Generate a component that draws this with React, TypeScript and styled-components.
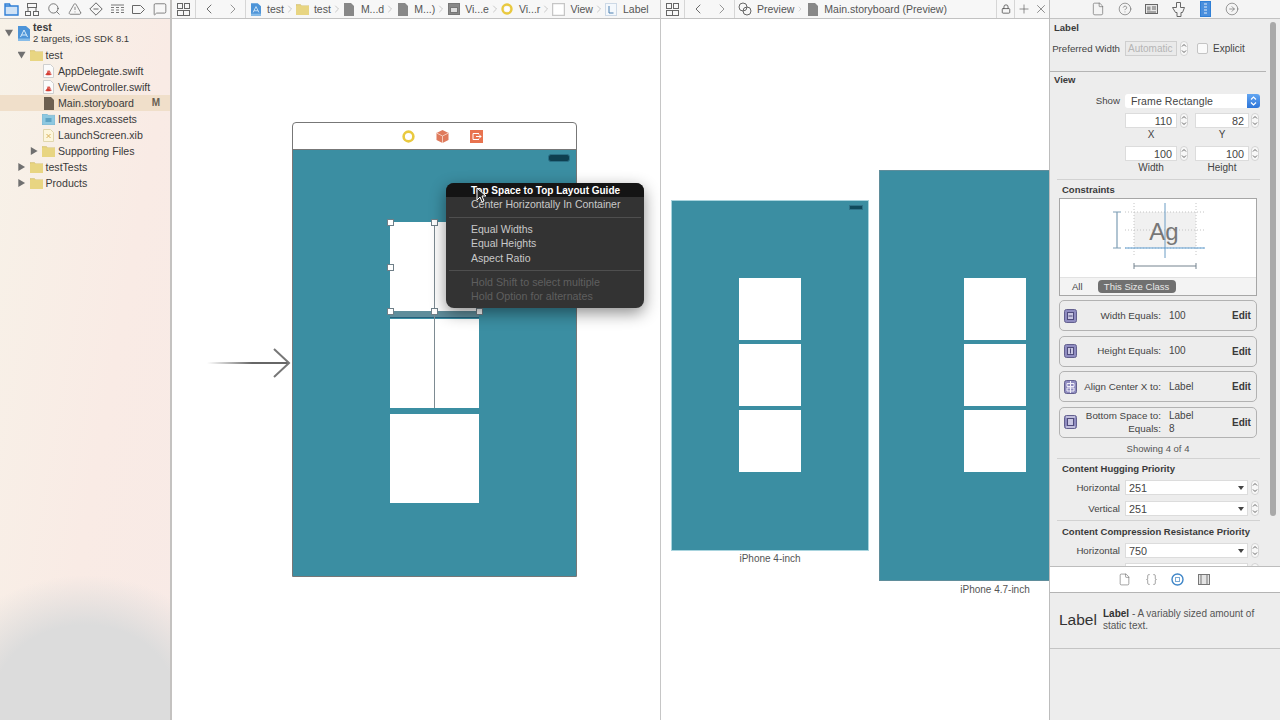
import React from "react";
import styled, { createGlobalStyle } from "styled-components";
import {
  ChevronLeft,
  ChevronRight,
  CircleArrowRight,
  CircleHelp,
  Braces,
  File,
  Lock,
  MessageSquare,
  Plus,
  Search,
  TriangleAlert,
  X,
} from "lucide-react";

const GlobalStyle = createGlobalStyle`
  html, body {
    margin: 0;
    padding: 0;
    background: #fff;
  }
  body {
    font-family: "Liberation Sans", Arial, sans-serif;
    color: #333;
  }
`;

const Screen = styled.div`
  width: 1280px;
  height: 720px;
  display: flex;
  overflow: hidden;
  font-size: 10.6px;
`;

const Bar = styled.div`
  height: 19px;
  flex: none;
  display: flex;
  align-items: center;
  box-sizing: border-box;
  background: #f7f7f7;
  border-bottom: 1px solid #c2c2c2;
  color: #555;
`;

/* navigator */
const Navigator = styled.div`
  width: 172px;
  flex: none;
  display: flex;
  flex-direction: column;
  box-sizing: border-box;
  border-right: 2px solid #c4c2c0;
  background:
    radial-gradient(ellipse 150px 125px at 85px 700px, #dcdcdc 60%, rgba(220, 220, 220, 0) 100%),
    linear-gradient(100deg, #f7f2e8 0%, #f9ebe5 60%, #f8eae6 100%);
`;

const NavBar = styled(Bar)`
  justify-content: space-between;
  padding: 0 2px 0 3px;
`;

const NavTool = styled.span`
  width: 16px;
  height: 16px;
  display: flex;
  align-items: center;
  justify-content: center;
`;

const Tree = styled.div`
  display: flex;
  flex-direction: column;
`;

const TreeRow = styled.div<{ $depth: number; $selected?: boolean }>`
  height: 16px;
  display: flex;
  align-items: center;
  padding-left: ${(p) => 5 + p.$depth * 12.5}px;
  background: ${(p) => (p.$selected ? "#f0dfca" : "transparent")};
  color: #3a3a3a;
  position: relative;
`;

const ProjectRow = styled(TreeRow)`
  height: 28px;
`;

const Disclosure = styled.span<{ $open?: boolean; $empty?: boolean }>`
  width: 8px;
  height: 8px;
  flex: none;
  margin-right: 4px;
  visibility: ${(p) => (p.$empty ? "hidden" : "visible")};
  background: #707070;
  clip-path: ${(p) =>
    p.$open ? "polygon(0 10%, 100% 10%, 50% 95%)" : "polygon(10% 0, 95% 50%, 10% 100%)"};
`;

const TreeIcon = styled.span`
  width: 13px;
  height: 14px;
  flex: none;
  margin-right: 3px;
  display: flex;
  align-items: center;
  justify-content: center;
`;

const ProjectText = styled.div`
  display: flex;
  flex-direction: column;
  line-height: 12px;
  font-size: 9.5px;
  white-space: nowrap;
  b {
    font-size: 10.6px;
  }
`;

const Badge = styled.span`
  position: absolute;
  right: 10px;
  top: 2px;
  font-weight: 700;
  font-size: 10px;
  color: #6a5f52;
`;

/* editor */
const Editor = styled.div`
  width: 489px;
  flex: none;
  display: flex;
  flex-direction: column;
  box-sizing: border-box;
  border-right: 1px solid #c6c6c6;
  background: #fff;
`;

const PreviewPane = styled.div`
  width: 389px;
  flex: none;
  display: flex;
  flex-direction: column;
  box-sizing: border-box;
  border-right: 1px solid #bdbdbd;
  background: #fff;
`;

const BarButton = styled.span<{ $w: number }>`
  width: ${(p) => p.$w}px;
  height: 18px;
  flex: none;
  display: flex;
  align-items: center;
  justify-content: center;
`;

const BarRule = styled.span`
  width: 1px;
  height: 18px;
  flex: none;
  background: #d6d6d6;
`;

const Crumbs = styled.div`
  display: flex;
  align-items: center;
  padding-left: 3px;
  height: 18px;
`;

const Crumb = styled.span`
  display: flex;
  align-items: center;
  gap: 5px;
  color: #555;
  font-size: 10.5px;
  white-space: nowrap;
`;

const CrumbIcon = styled.span`
  width: 13px;
  height: 14px;
  display: flex;
  align-items: center;
  justify-content: center;
`;

const CrumbSep = styled.span`
  width: 12px;
  display: flex;
  justify-content: center;
  color: #999;
`;

const RightTools = styled.div`
  margin-left: auto;
  display: flex;
  align-items: center;
`;

const Canvas = styled.div`
  flex: 1;
  position: relative;
  overflow: hidden;
`;

const EntryArrow = styled.svg`
  position: absolute;
  left: 35px;
  top: 328px;
`;

const Scene = styled.div`
  position: absolute;
  left: 120px;
  top: 103px;
  width: 285px;
  height: 455px;
  display: flex;
  flex-direction: column;
  box-sizing: border-box;
  border: 1px solid #777;
  border-radius: 4px 4px 0 0;
`;

const SceneDock = styled.div`
  height: 26px;
  flex: none;
  display: flex;
  align-items: center;
  justify-content: center;
  gap: 21px;
  padding-left: 16px;
  border-bottom: 1px solid #777;
`;

const SceneView = styled.div`
  flex: 1;
  position: relative;
  background: #3b8ea2;
  display: flex;
  flex-direction: column;
  align-items: center;
  padding-top: 72px;
`;

const Battery = styled.span`
  position: absolute;
  right: 6px;
  top: 4px;
  width: 22px;
  height: 8px;
  box-sizing: border-box;
  border: 1px solid #2a6f85;
  border-radius: 3px;
  background: #0e3f50;
`;

const SceneLabel = styled.div<{ $gap?: number }>`
  width: 89px;
  height: 89px;
  flex: none;
  position: relative;
  background: #fff;
  margin-top: ${(p) => p.$gap ?? 0}px;
`;

const GuideLine = styled.span<{ $h: number }>`
  position: absolute;
  left: 44px;
  top: 0;
  width: 1px;
  height: ${(p) => p.$h}px;
  background: #7d8b92;
  z-index: 2;
`;

const Handle = styled.span<{ $x: number; $y: number }>`
  position: absolute;
  left: ${(p) => p.$x - 3}px;
  top: ${(p) => p.$y - 3}px;
  width: 5px;
  height: 5px;
  background: #fff;
  border: 1px solid #6f7f88;
  z-index: 3;
`;

const SpacingBand = styled.span`
  position: absolute;
  left: 0;
  top: 89px;
  width: 100%;
  height: 6px;
  background: #5f8d9b;
  border-bottom: 1px solid #24607c;
`;

const PopMenu = styled.div`
  position: absolute;
  left: 274px;
  top: 164px;
  width: 198px;
  height: 125px;
  box-sizing: border-box;
  border-radius: 8px;
  background: #333;
  box-shadow: 0 5px 16px rgba(0, 0, 0, 0.45);
  overflow: hidden;
  z-index: 5;
  font-size: 10.5px;
`;

const MenuItem = styled.div<{ $active?: boolean; $muted?: boolean }>`
  height: 14.4px;
  line-height: 15px;
  padding-left: 25px;
  white-space: nowrap;
  background: ${(p) => (p.$active ? "#141414" : "transparent")};
  color: ${(p) => (p.$active ? "#fff" : p.$muted ? "#5f5f5f" : "#c9c9c9")};
  font-weight: ${(p) => (p.$active ? 700 : 400)};
  font-size: ${(p) => (p.$active ? 10 : p.$muted ? 10.7 : 10.5)}px;
`;

const MenuRule = styled.div`
  height: 1px;
  margin: 5px 3px 4px 3px;
  background: #4f4f4f;
`;

const Cursor = styled.svg`
  position: absolute;
  left: 304px;
  top: 168px;
  z-index: 6;
`;

const PreviewCanvas = styled(Canvas)``;

const Phone = styled.div<{ $x: number; $y: number; $w: number; $h: number; $edge: string }>`
  position: absolute;
  left: ${(p) => p.$x}px;
  top: ${(p) => p.$y}px;
  width: ${(p) => p.$w}px;
  height: ${(p) => p.$h}px;
  box-sizing: border-box;
  border: 1px solid ${(p) => p.$edge};
  background: #3b8ea2;
  display: flex;
  flex-direction: column;
  align-items: center;
  justify-content: center;
  gap: 4px;
  padding-bottom: 2px;
`;

const PhoneLabel = styled.div`
  width: 62px;
  height: 62px;
  background: #fff;
`;

const PhoneBattery = styled.span`
  position: absolute;
  right: 5px;
  top: 4px;
  width: 14px;
  height: 5px;
  background: #0f4a5c;
  border: 1px solid #2f7288;
  box-sizing: border-box;
`;

const PhoneCaption = styled.div<{ $x: number; $y: number; $w: number }>`
  position: absolute;
  left: ${(p) => p.$x}px;
  top: ${(p) => p.$y}px;
  width: ${(p) => p.$w}px;
  text-align: center;
  font-size: 10px;
  line-height: 13px;
  color: #555;
  white-space: nowrap;
`;

/* inspector */
const Inspector = styled.div`
  width: 230px;
  flex: none;
  display: flex;
  flex-direction: column;
  background: #ededed;
  font-size: 10px;
  color: #444;
`;

const InspectorBar = styled(Bar)`
  padding-left: 35px;
  background: #f4f4f4;
  color: #666;
`;

const InspectorTab = styled.span<{ $on?: boolean }>`
  width: 26.7px;
  height: 18px;
  flex: none;
  display: flex;
  align-items: center;
  justify-content: center;
  color: ${(p) => (p.$on ? "#2f7fd6" : "#666")};
`;

const Scroller = styled.div`
  height: 547px;
  flex: none;
  position: relative;
  overflow: hidden;
`;

const ScrollThumb = styled.span`
  position: absolute;
  left: 220px;
  top: 3px;
  width: 6px;
  height: 494px;
  border-radius: 3px;
  background: #a9a9a9;
`;

const Section = styled.div<{ $top: number; $height: number; $indent?: boolean; $rule?: boolean }>`
  height: ${(p) => p.$height}px;
  box-sizing: border-box;
  padding-top: ${(p) => p.$top}px;
  width: 216px;
  border-bottom: ${(p) => (p.$rule ? "1px solid #b4b4b4" : "0")};
  ${(p) => (p.$indent ? "margin-left: 7px; width: 203px; border-bottom-color: #d2d2d2;" : "")}
`;

const SoftRule = styled.div`
  height: 1px;
  margin: 5px 0 0 7px;
  width: 203px;
  background: #d2d2d2;
`;

const SectionTitle = styled.div<{ $x?: number; $mb?: number }>`
  height: 14px;
  line-height: 16px;
  font-weight: 700;
  font-size: 9.5px;
  color: #3a3a3a;
  padding-left: ${(p) => p.$x ?? 4}px;
  margin-bottom: ${(p) => p.$mb ?? 7}px;
  white-space: nowrap;
`;

const FormRow = styled.div<{ $mb?: number; $outdent?: boolean }>`
  height: 15px;
  display: flex;
  align-items: center;
  margin-bottom: ${(p) => p.$mb ?? 0}px;
  margin-left: ${(p) => (p.$outdent ? -7 : 0)}px;
`;

const RowLabel = styled.span<{ $w?: number }>`
  width: ${(p) => p.$w ?? 70}px;
  margin-right: 5px;
  text-align: right;
  flex: none;
  white-space: nowrap;
  font-size: 9.7px;
`;

const Field = styled.span<{ $w: number; $muted?: boolean; $left?: boolean; $ml?: number }>`
  width: ${(p) => p.$w}px;
  height: 15px;
  flex: none;
  box-sizing: border-box;
  display: flex;
  align-items: center;
  justify-content: ${(p) => (p.$left ? "flex-start" : "flex-end")};
  padding: 0 ${(p) => (p.$muted ? 1 : 4)}px 0 ${(p) => (p.$muted ? 2 : 3)}px;
  margin-left: ${(p) => p.$ml ?? 0}px;
  background: ${(p) => (p.$muted ? "#eaeaea" : "#fff")};
  border: 1px solid ${(p) => (p.$muted ? "#cfcfcf" : "#dcdcdc")};
  color: ${(p) => (p.$muted ? "#b5b5b5" : "#444")};
  font-size: ${(p) => (p.$muted ? 10 : 10.8)}px;
  white-space: nowrap;
  overflow: hidden;
  position: relative;
`;

const ComboCaret = styled.span`
  position: absolute;
  right: 3px;
  top: 5px;
  border-left: 3px solid transparent;
  border-right: 3px solid transparent;
  border-top: 4px solid #444;
`;

const StepperBox = styled.span<{ $ml: number }>`
  width: 8px;
  height: 15px;
  flex: none;
  margin-left: ${(p) => p.$ml}px;
  box-sizing: border-box;
  border: 1px solid #d4d4d4;
  border-radius: 4px;
  background: #f7f7f7;
  display: flex;
  align-items: center;
  justify-content: center;
`;

const CheckBox = styled.span`
  width: 9px;
  height: 9px;
  margin-left: 9px;
  margin-right: 5px;
  flex: none;
  border: 1px solid #c4c4c4;
  border-radius: 2px;
  background: #fafafa;
`;

const Popup = styled.span`
  width: 135px;
  height: 14px;
  flex: none;
  box-sizing: border-box;
  display: flex;
  align-items: center;
  padding-left: 6px;
  background: #fff;
  border-radius: 3px;
  position: relative;
  overflow: hidden;
  font-size: 10.5px;
  letter-spacing: 0.1px;
`;

const PopupEnd = styled.span`
  position: absolute;
  right: 0;
  top: 0;
  width: 13px;
  height: 14px;
  background: linear-gradient(#63a6f2, #2c74d8);
  display: flex;
  align-items: center;
  justify-content: center;
`;

const CaptionRow = styled.div<{ $mb?: number }>`
  height: 12px;
  display: flex;
  line-height: 12px;
  margin: 1px 0 ${(p) => p.$mb ?? 0}px 75px;
  font-size: 10px;
`;

const Caption = styled.span<{ $w: number; $ml?: number }>`
  width: ${(p) => p.$w}px;
  margin-left: ${(p) => p.$ml ?? 0}px;
  text-align: center;
`;

const ConstraintBox = styled.div`
  width: 198px;
  height: 98px;
  margin-left: 2px;
  box-sizing: border-box;
  border: 1px solid #a6a6a6;
  background: #fff;
  display: flex;
  flex-direction: column;
`;

const ConstraintArt = styled.svg`
  flex: none;
  display: block;
`;

const SizeTabs = styled.div`
  flex: 1;
  display: flex;
  align-items: center;
  border-top: 1px solid #e2e2e2;
  background: #f3f3f3;
  padding-left: 12px;
  font-size: 9.5px;
`;

const SizeTab = styled.span<{ $on?: boolean }>`
  ${(p) =>
    p.$on
      ? `margin-left: 15px;
         width: 78px;
         height: 13px;
         line-height: 13px;
         text-align: center;
         border-radius: 4px;
         background: #707070;
         color: #e8e8e8;`
      : ""}
`;

const ConstraintList = styled.div`
  display: flex;
  flex-direction: column;
  gap: 4.5px;
  margin: 4px 0 0 2px;
`;

const ConstraintRow = styled.div`
  width: 198px;
  height: 31px;
  box-sizing: border-box;
  display: grid;
  grid-template-columns: 17px 80px 71px 1fr;
  align-items: center;
  padding-left: 4px;
  border: 1px solid #b2b2b2;
  border-radius: 5px;
  font-size: 9.8px;
`;

const ConstraintName = styled.span`
  text-align: right;
  white-space: nowrap;
  line-height: 13.5px;
`;

const ConstraintValue = styled.span`
  padding-left: 8px;
  white-space: nowrap;
  line-height: 13.5px;
  font-size: 10px;
`;

const EditLink = styled.span`
  font-weight: 700;
  font-size: 10px;
  color: #3a3a3a;
`;

const ShowingNote = styled.div`
  text-align: center;
  font-size: 9.5px;
  line-height: 12px;
  margin-top: 5px;
  width: 202px;
  color: #555;
`;

const LibraryTabs = styled.div`
  height: 27px;
  flex: none;
  box-sizing: border-box;
  display: flex;
  align-items: center;
  padding-left: 61px;
  background: #fff;
  border-top: 1px solid #bdbdbd;
  border-bottom: 1px solid #b4b4b4;
  color: #666;
`;

const LibraryTab = styled.span`
  width: 26.7px;
  display: flex;
  justify-content: center;
`;

const LibraryItem = styled.div`
  height: 56px;
  flex: none;
  box-sizing: border-box;
  display: flex;
  align-items: center;
  padding: 0 0 2px 9px;
  border-bottom: 1px solid #c4c4c4;
`;

const LibraryName = styled.span`
  width: 44px;
  flex: none;
  font-size: 15.5px;
  font-weight: 400;
  color: #333;
`;

const LibraryText = styled.div`
  display: flex;
  flex-direction: column;
`;

const LibraryLine = styled.span`
  font-size: 10px;
  line-height: 12px;
  white-space: nowrap;
  color: #555;
  b {
    color: #333;
  }
`;

/* small drawings */
const Folder = ({ w = 13, h = 12 }: { w?: number; h?: number }) => (
  <svg width={w} height={h} viewBox="0 0 13 12">
    <path d="M0 1.500h4.500l1 1.300H13V12H0z" fill="#e6d27c" stroke="#cdbb70" strokeWidth="0.500" />
    <rect x="0" y="3" width="13" height="9" fill="#e8d582" />
  </svg>
);

const SwiftFile = () => (
  <svg width="11" height="14" viewBox="0 0 11 14">
    <path d="M0.500 0.500h7l3 3v10h-10z" fill="#fbfbfb" stroke="#cfcfcf" />
    <path d="M2.500 10.500c2 1 4.500 .6 6-.3-2-.6-3.500-2.200-4.300-3.400 1 1 2.300 1.600 3.300 2-.4-1-1-2-1.600-2.600" fill="#d43b30" stroke="#d43b30" strokeWidth="0.500" />
  </svg>
);

const DarkDoc = ({ fill = "#6c5f50" }: { fill?: string }) => (
  <svg width="10" height="13" viewBox="0 0 10 13">
    <path d="M0 0h7l3 3v10H0z" fill={fill} />
  </svg>
);

const Assets = () => (
  <svg width="13" height="11" viewBox="0 0 13 11">
    <path d="M0 0h5l1 1.300h7V11H0z" fill="#8ec8e0" stroke="#6eaac6" strokeWidth="0.500" />
    <rect x="3.500" y="4" width="6" height="4" fill="#5fa4c4" />
  </svg>
);

const XibFile = () => (
  <svg width="11" height="13" viewBox="0 0 11 13">
    <path d="M0.500 0.500h7l3 3v9h-10z" fill="#fdf6dc" stroke="#e0d6ae" />
    <path d="M3.500 5l4 4M7.500 5l-4 4" stroke="#d9b25c" strokeWidth="1" />
  </svg>
);

const ProjectIcon = ({ w = 12, h = 15 }: { w?: number; h?: number }) => (
  <svg width={w} height={h} viewBox="0 0 12 15">
    <path d="M0 0h8l4 3.500V15H0z" fill="#4d94d8" />
    <path d="M6 4L2.500 11M6 4l3.500 7M3.500 9h5" stroke="#d8ecfb" strokeWidth="1" fill="none" />
    <rect y="12.500" width="12" height="2.500" fill="#87bce8" />
  </svg>
);

const ToolFolder = () => (
  <svg width="15" height="13" viewBox="0 0 15 13">
    <path d="M1 1h4.500l1 2H14v9H1zM1 3h13" fill="#cfe2f6" stroke="#2f7fd6" strokeWidth="1.400" />
  </svg>
);

const ToolTree = () => (
  <svg width="14" height="13" viewBox="0 0 14 13" fill="none" stroke="#666">
    <rect x="2.500" y="0.500" width="9" height="4" />
    <rect x="0.500" y="8.500" width="5" height="4" />
    <rect x="8.500" y="8.500" width="5" height="4" />
    <path d="M3 4.500v4M11 4.500v4" />
  </svg>
);

const ToolDiamond = () => (
  <svg width="14" height="14" viewBox="0 0 14 14" fill="none" stroke="#666">
    <path d="M7 .8L13.200 7 7 13.200 .8 7z" />
    <path d="M4.500 7h5" />
  </svg>
);

const ToolList = () => (
  <svg width="13" height="11" viewBox="0 0 13 11" fill="none" stroke="#777">
    <path d="M0 1h13M0 3.500h3M5 3.500h3M10 3.500h3M0 6h3M5 6h3M10 6h3M0 8.500h3M5 8.500h3M10 8.500h3" />
  </svg>
);

const ToolTag = () => (
  <svg width="13" height="9" viewBox="0 0 13 9" fill="none" stroke="#666">
    <path d="M.5 .5h8l4 4-4 4h-8z" />
  </svg>
);

const GridIcon = () => (
  <svg width="13" height="13" viewBox="0 0 13 13" fill="none" stroke="#666">
    <rect x="0.500" y="0.500" width="5" height="5" />
    <rect x="7.500" y="0.500" width="5" height="5" />
    <rect x="0.500" y="7.500" width="12" height="5" />
    <path d="M6.500 7.500v5" />
  </svg>
);

const Overlap = () => (
  <svg width="14" height="14" viewBox="0 0 14 14" fill="none" stroke="#666">
    <circle cx="5" cy="5" r="4" />
    <circle cx="9" cy="9" r="4" />
  </svg>
);

const ViewFrame = () => (
  <svg width="12" height="12" viewBox="0 0 12 12" fill="none" stroke="#777">
    <rect x="0.500" y="0.500" width="11" height="11" fill="#888" />
    <rect x="2.500" y="4.500" width="7" height="5" fill="#ddd" />
  </svg>
);

const Ring = ({ size = 12 }: { size?: number }) => (
  <svg width={size} height={size} viewBox="0 0 12 12" fill="none">
    <circle cx="6" cy="6" r="4.500" stroke="#e9c93f" strokeWidth="2.400" />
    <rect x="4" y="4" width="4" height="4" rx="1" fill="#fff" />
  </svg>
);

const WhiteSquare = () => (
  <svg width="13" height="13" viewBox="0 0 13 13">
    <rect x="0.500" y="0.500" width="12" height="12" fill="#fff" stroke="#c6c6c6" strokeWidth="1.500" />
  </svg>
);

const LabelBox = () => (
  <svg width="12" height="13" viewBox="0 0 12 13">
    <rect x="0.500" y="0.500" width="11" height="12" fill="#f4f8fc" stroke="#cdd9e6" />
    <path d="M4 3v7h4.500" stroke="#4a7fb0" fill="none" />
  </svg>
);

const SidebarsTab = () => (
  <svg width="11" height="16" viewBox="0 0 11 16">
    <rect x="0.500" y="0.500" width="10" height="15" fill="#4a8fdd" stroke="#2f7fd6" />
    <path d="M4 3h3M4 6h3M4 9h3M4 12h3" stroke="#e4effa" />
  </svg>
);

const IdentityTab = () => (
  <svg width="13" height="10" viewBox="0 0 13 10" fill="none" stroke="#666">
    <rect x="0.500" y="0.500" width="12" height="9" fill="#e6e6e6" />
    <rect x="2" y="2.500" width="3.500" height="4" fill="#999" stroke="none" />
    <path d="M7 3h4M7 5h4M2 8h9" />
  </svg>
);

const AttrTab = () => (
  <svg width="13" height="15" viewBox="0 0 13 15" fill="none" stroke="#666">
    <path d="M4.500 .5h4v5h4l-2 5h-1.500v4h-4v-4H3.500l-3-5h4z" />
  </svg>
);

const StepGlyph = () => (
  <svg width="6" height="11" viewBox="0 0 6 11" fill="none" stroke="#555" strokeWidth="0.900">
    <path d="M1 3.500l2-2 2 2M1 7.500l2 2 2-2" />
  </svg>
);

const PopupGlyph = () => (
  <svg width="7" height="10" viewBox="0 0 7 10" fill="none" stroke="#fff" strokeWidth="1.200">
    <path d="M1 3.500l2.500-2.500 2.500 2.500M1 6.500l2.500 2.500 2.500-2.500" />
  </svg>
);

const Stepper = ({ ml = 3 }: { ml?: number }) => (
  <StepperBox $ml={ml}>
    <StepGlyph />
  </StepperBox>
);

const ConstraintGlyph = ({ kind }: { kind: string }) => (
  <svg width="13" height="14" viewBox="0 0 13 14">
    <rect x="0.500" y="0.500" width="12" height="13" rx="2" fill="#8f8cc0" stroke="#63608f" />
    {kind === "center" ? (
      <path d="M6.500 1v12M3 3.500h7v3H3zM3 8h7v3H3z" stroke="#f0eff8" fill="none" />
    ) : (
      <>
        <rect x="3.500" y="3.500" width="6" height="7" fill="#c8c6e2" stroke="#4f4c7d" />
        {kind === "height" && <path d="M6.500 4.500v5" stroke="#4f4c7d" />}
        {kind === "width" && <path d="M4.500 7h4" stroke="#4f4c7d" />}
        {kind === "bottom" && <path d="M2 12h9M2 2h9" stroke="#f0eff8" />}
      </>
    )}
  </svg>
);

const navTools = [
  <ToolFolder key="a" />,
  <ToolTree key="b" />,
  <Search key="c" size={14} strokeWidth={1.3} />,
  <TriangleAlert key="d" size={14} strokeWidth={1.2} />,
  <ToolDiamond key="e" />,
  <ToolList key="f" />,
  <ToolTag key="g" />,
  <MessageSquare key="h" size={14} strokeWidth={1.2} />,
];

const treeRows = [
  { name: "test", depth: 1, icon: <Folder />, open: true },
  { name: "AppDelegate.swift", depth: 2, icon: <SwiftFile />, leaf: true },
  { name: "ViewController.swift", depth: 2, icon: <SwiftFile />, leaf: true },
  { name: "Main.storyboard", depth: 2, icon: <DarkDoc />, leaf: true, selected: true },
  { name: "Images.xcassets", depth: 2, icon: <Assets />, leaf: true },
  { name: "LaunchScreen.xib", depth: 2, icon: <XibFile />, leaf: true },
  { name: "Supporting Files", depth: 2, icon: <Folder /> },
  { name: "testTests", depth: 1, icon: <Folder /> },
  { name: "Products", depth: 1, icon: <Folder /> },
];

const crumbs = [
  { text: "test", icon: <ProjectIcon w={10} h={13} /> },
  { text: "test", icon: <Folder /> },
  { text: "M...d", icon: <DarkDoc fill="#888" /> },
  { text: "M...)", icon: <DarkDoc fill="#888" /> },
  { text: "Vi...e", icon: <ViewFrame /> },
  { text: "Vi...r", icon: <Ring /> },
  { text: "View", icon: <WhiteSquare /> },
  { text: "Label", icon: <LabelBox /> },
];

const constraints = [
  { glyph: "width", name: "Width Equals:", value: "100" },
  { glyph: "height", name: "Height Equals:", value: "100" },
  { glyph: "center", name: "Align Center X to:", value: "Label" },
];

const PaneNav = () => (
  <>
    <BarButton $w={23}>
      <GridIcon />
    </BarButton>
    <BarRule />
    <BarButton $w={25}>
      <ChevronLeft size={16} strokeWidth={1.3} />
    </BarButton>
    <BarButton $w={24}>
      <ChevronRight size={16} strokeWidth={1.3} color="#888" />
    </BarButton>
    <BarRule />
  </>
);

export default function App() {
  return (
    <Screen>
      <GlobalStyle />
      <Navigator>
        <NavBar>
          {navTools.map((tool, i) => (
            <NavTool key={i}>{tool}</NavTool>
          ))}
        </NavBar>
        <Tree>
          <ProjectRow $depth={0}>
            <Disclosure $open />
            <TreeIcon>
              <ProjectIcon />
            </TreeIcon>
            <ProjectText>
              <b>test</b>
              <span>2 targets, iOS SDK 8.1</span>
            </ProjectText>
          </ProjectRow>
          {treeRows.map((row) => (
            <TreeRow key={row.name} $depth={row.depth} $selected={row.selected}>
              <Disclosure $open={row.open} $empty={row.leaf} />
              <TreeIcon>{row.icon}</TreeIcon>
              {row.name}
              {row.selected && <Badge>M</Badge>}
            </TreeRow>
          ))}
        </Tree>
      </Navigator>

      <Editor>
        <Bar>
          <PaneNav />
          <Crumbs>
            {crumbs.map((c, i) => (
              <React.Fragment key={i}>
                <Crumb>
                  <CrumbIcon>{c.icon}</CrumbIcon>
                  {c.text}
                </Crumb>
                {i < crumbs.length - 1 && (
                  <CrumbSep>
                    <ChevronRight size={12} strokeWidth={1} />
                  </CrumbSep>
                )}
              </React.Fragment>
            ))}
          </Crumbs>
        </Bar>
        <Canvas>
          <EntryArrow width="84" height="32" viewBox="0 0 84 32" fill="none">
            <defs>
              <linearGradient id="tail">
                <stop offset="0" stopColor="#777" stopOpacity="0" />
                <stop offset="0.55" stopColor="#666" />
              </linearGradient>
            </defs>
            <rect x="0" y="15" width="82" height="2" fill="url(#tail)" />
            <path d="M67 2l15 14-15 14" stroke="#777" strokeWidth="2" />
          </EntryArrow>
          <Scene>
            <SceneDock>
              <Ring size={13} />
              <svg width="13" height="13" viewBox="0 0 13 13">
                <path d="M6.500 0l6 3v7l-6 3-6-3V3z" fill="#df7a5c" />
                <path d="M.5 3l6 3 6-3M6.500 6v7" stroke="#f4c9b8" fill="none" />
              </svg>
              <svg width="13" height="13" viewBox="0 0 13 13">
                <rect width="13" height="13" fill="#e8734f" />
                <path d="M9 3.500H3v6h6M6 6.500h5M9 4.500l2 2-2 2" stroke="#fff" fill="none" />
              </svg>
            </SceneDock>
            <SceneView>
              <Battery />
              <SceneLabel>
                <GuideLine $h={186} />
                <SpacingBand />
                <Handle $x={0} $y={0} />
                <Handle $x={44} $y={0} />
                <Handle $x={0} $y={45} />
                <Handle $x={0} $y={89} />
                <Handle $x={44} $y={89} />
                <Handle $x={89} $y={89} />
              </SceneLabel>
              <SceneLabel $gap={8} />
              <SceneLabel $gap={6} />
            </SceneView>
          </Scene>
          <PopMenu>
            <MenuItem $active>Top Space to Top Layout Guide</MenuItem>
            <MenuItem>Center Horizontally In Container</MenuItem>
            <MenuRule />
            <MenuItem>Equal Widths</MenuItem>
            <MenuItem>Equal Heights</MenuItem>
            <MenuItem>Aspect Ratio</MenuItem>
            <MenuRule />
            <MenuItem $muted>Hold Shift to select multiple</MenuItem>
            <MenuItem $muted>Hold Option for alternates</MenuItem>
          </PopMenu>
          <Cursor width="12" height="17" viewBox="0 0 12 17">
            <path d="M1 1v12l3-3 2 5 2-1-2-5h4z" fill="#222" stroke="#fff" strokeWidth="1" />
          </Cursor>
        </Canvas>
      </Editor>

      <PreviewPane>
        <Bar>
          <PaneNav />
          <Crumbs>
            <Crumb>
              <Overlap />
              Preview
            </Crumb>
            <CrumbSep>
              <ChevronRight size={8} strokeWidth={1} />
            </CrumbSep>
            <Crumb>
              <CrumbIcon>
                <DarkDoc fill="#888" />
              </CrumbIcon>
              Main.storyboard (Preview)
            </Crumb>
          </Crumbs>
          <RightTools>
            <BarRule />
            <BarButton $w={17}>
              <Lock size={10} strokeWidth={2} />
            </BarButton>
            <BarRule />
            <BarButton $w={17}>
              <Plus size={14} strokeWidth={1.1} />
            </BarButton>
            <BarButton $w={17}>
              <X size={14} strokeWidth={1.1} />
            </BarButton>
          </RightTools>
        </Bar>
        <PreviewCanvas>
          <Phone $x={10} $y={181} $w={198} $h={351} $edge="#a8d4de">
            <PhoneBattery />
            <PhoneLabel />
            <PhoneLabel />
            <PhoneLabel />
          </Phone>
          <PhoneCaption $x={10} $y={533} $w={198}>
            iPhone 4-inch
          </PhoneCaption>
          <Phone $x={218} $y={151} $w={232} $h={411} $edge="#5f8d9b">
            <PhoneLabel />
            <PhoneLabel />
            <PhoneLabel />
          </Phone>
          <PhoneCaption $x={298} $y={564} $w={72}>
            iPhone 4.7-inch
          </PhoneCaption>
        </PreviewCanvas>
      </PreviewPane>

      <Inspector>
        <InspectorBar>
          <InspectorTab>
            <File size={14} strokeWidth={1.1} />
          </InspectorTab>
          <InspectorTab>
            <CircleHelp size={14} strokeWidth={1.1} />
          </InspectorTab>
          <InspectorTab>
            <IdentityTab />
          </InspectorTab>
          <InspectorTab>
            <AttrTab />
          </InspectorTab>
          <InspectorTab $on>
            <SidebarsTab />
          </InspectorTab>
          <InspectorTab>
            <CircleArrowRight size={14} strokeWidth={1.1} />
          </InspectorTab>
        </InspectorBar>

        <Scroller>
          <ScrollThumb />
          <Section $top={1} $height={53} $rule>
            <SectionTitle>Label</SectionTitle>
            <FormRow>
              <RowLabel>Preferred Width</RowLabel>
              <Field $w={52} $muted $left>
                Automatic
              </Field>
              <Stepper />
              <CheckBox />
              Explicit
            </FormRow>
          </Section>
          <Section $top={0} $height={107}>
            <SectionTitle>View</SectionTitle>
            <FormRow $mb={5}>
              <RowLabel>Show</RowLabel>
              <Popup>
                Frame Rectangle
                <PopupEnd>
                  <PopupGlyph />
                </PopupEnd>
              </Popup>
            </FormRow>
            <FormRow>
              <RowLabel />
              <Field $w={52}>110</Field>
              <Stepper />
              <Field $w={54} $ml={7}>
                82
              </Field>
              <Stepper ml={2} />
            </FormRow>
            <CaptionRow $mb={5}>
              <Caption $w={52}>X</Caption>
              <Caption $w={54} $ml={18}>
                Y
              </Caption>
            </CaptionRow>
            <FormRow>
              <RowLabel />
              <Field $w={52}>100</Field>
              <Stepper />
              <Field $w={54} $ml={7}>
                100
              </Field>
              <Stepper ml={2} />
            </FormRow>
            <CaptionRow>
              <Caption $w={52}>Width</Caption>
              <Caption $w={54} $ml={18}>
                Height
              </Caption>
            </CaptionRow>
            <SoftRule />
          </Section>
          <Section $top={3} $height={280} $indent $rule>
            <SectionTitle $x={5} $mb={2}>
              Constraints
            </SectionTitle>
            <ConstraintBox>
              <ConstraintArt width="196" height="78" viewBox="0 0 196 78" fill="none">
                <rect x="74" y="13" width="62" height="36" fill="#f1f1f1" />
                <path
                  d="M65 13h80M65 31h80M65 49h80M74 4v52M136 4v52"
                  stroke="#c4c4c4"
                  strokeDasharray="1 2"
                />
                <text x="104" y="41" textAnchor="middle" fontSize="24" fill="#777" fontFamily="Liberation Sans">
                  Ag
                </text>
                <path d="M105 4v55" stroke="#6a9cc4" />
                <path d="M65 49h80" stroke="#5b9bd0" />
                <path d="M57 13v36M53 13h8M53 49h8" stroke="#7d9db5" strokeWidth="1.2" />
                <path d="M74 67h62M74 64v6M136 64v6" stroke="#74838f" />
              </ConstraintArt>
              <SizeTabs>
                <SizeTab>All</SizeTab>
                <SizeTab $on>This Size Class</SizeTab>
              </SizeTabs>
            </ConstraintBox>
            <ConstraintList>
              {constraints.map((c) => (
                <ConstraintRow key={c.name}>
                  <ConstraintGlyph kind={c.glyph} />
                  <ConstraintName>{c.name}</ConstraintName>
                  <ConstraintValue>{c.value}</ConstraintValue>
                  <EditLink>Edit</EditLink>
                </ConstraintRow>
              ))}
              <ConstraintRow>
                <ConstraintGlyph kind="bottom" />
                <ConstraintName>
                  Bottom Space to:
                  <br />
                  Equals:
                </ConstraintName>
                <ConstraintValue>
                  Label
                  <br />8
                </ConstraintValue>
                <EditLink>Edit</EditLink>
              </ConstraintRow>
            </ConstraintList>
            <ShowingNote>Showing 4 of 4</ShowingNote>
          </Section>
          <Section $top={2} $height={62} $indent $rule>
            <SectionTitle $x={5} $mb={5}>
              Content Hugging Priority
            </SectionTitle>
            <FormRow $mb={6} $outdent>
              <RowLabel>Horizontal</RowLabel>
              <Field $w={123} $left>
                251
                <ComboCaret />
              </Field>
              <Stepper />
            </FormRow>
            <FormRow $outdent>
              <RowLabel>Vertical</RowLabel>
              <Field $w={123} $left>
                251
                <ComboCaret />
              </Field>
              <Stepper />
            </FormRow>
          </Section>
          <Section $top={3} $height={60} $indent>
            <SectionTitle $x={5} $mb={5}>
              Content Compression Resistance Priority
            </SectionTitle>
            <FormRow $mb={5} $outdent>
              <RowLabel>Horizontal</RowLabel>
              <Field $w={123} $left>
                750
                <ComboCaret />
              </Field>
              <Stepper />
            </FormRow>
            <FormRow $outdent>
              <RowLabel />
              <Field $w={123} $left />
              <Stepper />
            </FormRow>
          </Section>
        </Scroller>

        <LibraryTabs>
          <LibraryTab>
            <File size={13} strokeWidth={1.1} />
          </LibraryTab>
          <LibraryTab>
            <Braces size={13} strokeWidth={1.1} />
          </LibraryTab>
          <LibraryTab>
            <svg width="13" height="13" viewBox="0 0 13 13" fill="none" stroke="#3f86c8">
              <circle cx="6.500" cy="6.500" r="5.500" strokeWidth="1.400" />
              <rect x="4.500" y="4.500" width="4" height="4" stroke="#7aa9d4" />
            </svg>
          </LibraryTab>
          <LibraryTab>
            <svg width="12" height="11" viewBox="0 0 12 11" fill="#e4e4e4" stroke="#777">
              <rect x="0.500" y="0.500" width="11" height="10" />
              <path d="M3 .5v10M9 .5v10" />
            </svg>
          </LibraryTab>
        </LibraryTabs>
        <LibraryItem>
          <LibraryName>Label</LibraryName>
          <LibraryText>
            <LibraryLine>
              <b>Label</b> - A variably sized amount of
            </LibraryLine>
            <LibraryLine>static text.</LibraryLine>
          </LibraryText>
        </LibraryItem>
      </Inspector>
    </Screen>
  );
}
